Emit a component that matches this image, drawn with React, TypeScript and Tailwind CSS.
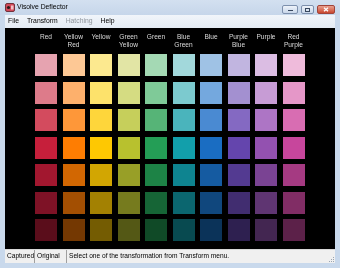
import React from "react";

const labels: string[][] = [
  ["Red"],
  ["Yellow", "Red"],
  ["Yellow"],
  ["Green", "Yellow"],
  ["Green"],
  ["Blue", "Green"],
  ["Blue"],
  ["Purple", "Blue"],
  ["Purple"],
  ["Red", "Purple"],
];

const rows: string[][] = [
  ["#e6a3b0", "#fdc895", "#fce98f", "#e2e5a5", "#a4d9b4", "#a2d8db", "#9fc2e5", "#c1b5e0", "#dbbde3", "#efbbdb"],
  ["#dd7b8a", "#fdb06c", "#fde26b", "#d5dc82", "#7fca98", "#7ccacf", "#74a8de", "#a390d0", "#c79cd5", "#e597c8"],
  ["#d34b5e", "#fe9739", "#fed63b", "#c6cf5b", "#56b477", "#4ab4bc", "#4a8ad2", "#8469c2", "#ad75c5", "#d86db2"],
  ["#c61f3b", "#fe7d02", "#fec802", "#b8c12e", "#249e56", "#129fab", "#1a6dc2", "#6445ad", "#9351b0", "#c7469c"],
  ["#a2172f", "#d26702", "#d2a602", "#989f27", "#1d8346", "#0e8490", "#155ba1", "#533a91", "#7a4393", "#a53a82"],
  ["#7e1226", "#a34f02", "#a38102", "#767b1e", "#166536", "#0b666f", "#10477d", "#412d70", "#5f3572", "#812d65"],
  ["#5a0d1b", "#743802", "#745c02", "#545815", "#104a27", "#084a50", "#0b3359", "#2e2050", "#432651", "#5c2149"],
];

export default function App() {
  return (
    <div
      className="w-[340px] h-[268px] flex flex-col bg-[#c9d9ec] overflow-hidden antialiased will-change-transform"
      style={{ fontFamily: '"Liberation Sans", Arial, sans-serif' }}
    >
      {/* Title bar */}
      <div className="h-[15px] flex items-center justify-between bg-gradient-to-b from-[#d3e0f0] to-[#c6d6ea] pl-[5px] pr-[5px]">
        <div className="flex items-center gap-[2px]">
          <svg width="10" height="9" viewBox="0 0 10 9">
            <rect x="0.5" y="0.5" width="9" height="8" rx="1.5" fill="#d24a5a" stroke="#5a1a22" strokeWidth="0.8" />
            <circle cx="3.5" cy="4.5" r="1.6" fill="#2a1a1a" />
            <rect x="6" y="2.5" width="2.5" height="4" fill="#f2c2c8" />
          </svg>
          <span className="text-[6.8px] leading-none text-black">Visolve Deflector</span>
        </div>
        <div className="flex items-start gap-[3px] self-start mt-[5px]">
          <div className="w-[16px] h-[9px] rounded-[2px] border border-[#7d90ad] bg-gradient-to-b from-[#eef3fa] to-[#c9d7ea] flex items-end justify-center pb-[2px]">
            <div className="w-[5px] h-[1.5px] bg-[#37475e]" />
          </div>
          <div className="w-[13px] h-[9px] rounded-[2px] border border-[#7d90ad] bg-gradient-to-b from-[#eef3fa] to-[#c9d7ea] flex items-center justify-center">
            <div className="w-[5px] h-[4px] border border-[#37475e]" />
          </div>
          <div className="w-[18px] h-[9px] rounded-[2px] border border-[#a1443a] bg-gradient-to-b from-[#e8a08f] to-[#c9462f] flex items-center justify-center">
            <svg width="6" height="5" viewBox="0 0 6 5">
              <path d="M1 0.8 L5 4.2 M5 0.8 L1 4.2" stroke="#ffffff" strokeWidth="1.3" />
            </svg>
          </div>
        </div>
      </div>

      <div className="flex-1 flex flex-col px-[5px]">
        {/* Menu bar */}
        <div className="h-[13px] flex items-center gap-[8px] pl-[3px] bg-gradient-to-b from-[#f1f5fa] to-[#e4ebf4] text-[6.8px] leading-none">
          <span className="text-black">File</span>
          <span className="text-black">Transform</span>
          <span className="text-[#8e949b]">Hatching</span>
          <span className="text-black">Help</span>
        </div>

        {/* Canvas */}
        <div className="h-[221px] bg-black flex flex-col pl-[30px]">
          <div className="mt-[4.5px] grid grid-cols-[repeat(10,22px)] gap-x-[5.5px] h-[17px]">
            {labels.map((l, i) => (
              <div key={i} className="flex flex-col items-center">
                {l.map((t, j) => (
                  <span
                    key={j}
                    className="whitespace-nowrap text-[6.6px] leading-[8.5px] text-[#dadada]"
                  >
                    {t}
                  </span>
                ))}
              </div>
            ))}
          </div>
          <div className="mt-[4.5px] grid grid-cols-[repeat(10,22px)] auto-rows-[22px] gap-[5.5px]">
            {rows.map((r, i) =>
              r.map((c, j) => (
                <div key={`${i}-${j}`} style={{ backgroundColor: c }} />
              ))
            )}
          </div>
        </div>

        {/* Status bar */}
        <div className="h-[14px] flex items-stretch bg-[#f0f0f0] text-[6.6px] leading-none text-black border-t border-[#d8d8d8]">
          <div className="w-[30px] flex items-center pl-[2px] border-r border-[#a0a0a0]">Captured</div>
          <div className="w-[32px] flex items-center pl-[2px] border-r border-[#a0a0a0]">Original</div>
          <div className="flex-1 flex items-center pl-[2px] relative">
            Select one of the transformation from Transform menu.
            <div className="absolute right-[1px] bottom-[1px] flex flex-col items-end gap-[1px]">
              <div className="w-[1px] h-[1px] bg-[#9aa5b2]" />
              <div className="flex gap-[1px]"><div className="w-[1px] h-[1px] bg-[#9aa5b2]" /><div className="w-[1px] h-[1px] bg-[#9aa5b2]" /></div>
              <div className="flex gap-[1px]"><div className="w-[1px] h-[1px] bg-[#9aa5b2]" /><div className="w-[1px] h-[1px] bg-[#9aa5b2]" /><div className="w-[1px] h-[1px] bg-[#9aa5b2]" /></div>
            </div>
          </div>
        </div>
        <div className="h-[5px]" />
      </div>
    </div>
  );
}
